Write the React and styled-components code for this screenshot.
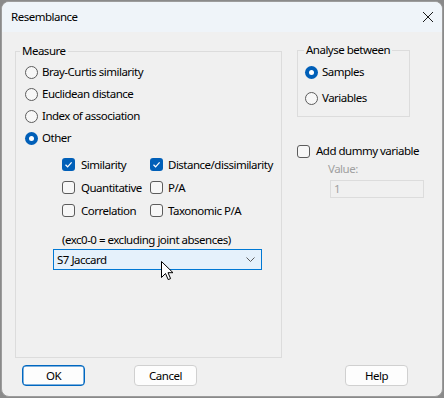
import React from "react";
import styled, { createGlobalStyle } from "styled-components";

const GlobalStyle = createGlobalStyle`
  html, body {
    margin: 0;
    padding: 0;
    background: #8a8a8a;
  }
  body {
    font-family: "Noto Sans", sans-serif;
    font-size: 11.5px;
    letter-spacing: -0.5px;
    color: #000;
  }
`;

const Window = styled.div`
  box-sizing: border-box;
  width: 442px;
  height: 396px;
  margin: 1px;
  border: 1px solid #9c9c9c;
  border-radius: 8px;
  background: #f0f0f0;
  overflow: hidden;
  display: flex;
  flex-direction: column;
`;

const TitleBar = styled.div`
  height: 30px;
  flex: none;
  display: flex;
  align-items: center;
  justify-content: space-between;
  padding: 0 8px 0 9px;
  background: #eff4f9;
`;

const Title = styled.span`
  line-height: 16px;
`;

const Close = styled.svg`
  width: 12px;
  height: 12px;
  display: block;
`;

const Body = styled.div`
  flex: 1;
  padding: 11px 0 0 13px;
  display: flex;
  flex-direction: column;
`;

const Main = styled.div`
  display: flex;
  align-items: flex-start;
  gap: 15px;
`;

const Group = styled.fieldset`
  box-sizing: border-box;
  margin: 0;
  padding: 0;
  width: ${(p) => p.$w}px;
  height: ${(p) => p.$h}px;
  border: 1px solid #dcdcdc;
  min-width: 0;
`;

const Legend = styled.legend`
  margin-left: ${(p) => p.$indent}px;
  padding: 0 2px;
  line-height: 16px;
`;

const Inner = styled.div`
  padding: ${(p) => p.$top}px 0 0 ${(p) => p.$left}px;
  display: flex;
  flex-direction: column;
  gap: ${(p) => p.$gap || 0}px;
`;

const Row = styled.label`
  display: flex;
  align-items: center;
  gap: ${(p) => p.$gap}px;
  height: ${(p) => p.$h || 22}px;
  line-height: 16px;
  white-space: nowrap;
`;

const RadioDot = styled.span`
  box-sizing: border-box;
  width: 13px;
  height: 13px;
  flex: none;
  border-radius: 50%;
  border: ${(p) => (p.$on ? "none" : "1px solid #5c5c5c")};
  background: ${(p) => (p.$on ? "#005fb8" : "#f7f7f7")};
  display: flex;
  align-items: center;
  justify-content: center;
  &::after {
    content: "";
    display: ${(p) => (p.$on ? "block" : "none")};
    width: 5px;
    height: 5px;
    border-radius: 50%;
    background: #fff;
  }
`;

const Box = styled.span`
  box-sizing: border-box;
  width: 13px;
  height: 13px;
  flex: none;
  border-radius: 3px;
  border: ${(p) => (p.$on ? "none" : "1px solid #5c5c5c")};
  background: ${(p) => (p.$on ? "#005fb8" : "#f7f7f7")};
  display: flex;
  align-items: center;
  justify-content: center;
`;

const CheckGrid = styled.div`
  display: grid;
  grid-template-columns: 88px auto;
  grid-auto-rows: 23px;
  margin: 4px 0 0 37px;
`;

const Note = styled.div`
  margin: 10px 0 0 37px;
  line-height: 16px;
`;

const ComboWrap = styled.div`
  position: relative;
  margin: 1px 0 0 28px;
  width: 209px;
`;

const Combo = styled.div`
  box-sizing: border-box;
  height: 21px;
  border: 1px solid #0078d4;
  background: #e5f1fb;
  display: flex;
  align-items: center;
  justify-content: space-between;
  padding: 0 6px 0 3px;
`;

const Cursor = styled.svg`
  position: absolute;
  left: 108px;
  top: 12px;
  width: 13px;
  height: 20px;
`;

const Side = styled.div`
  display: flex;
  flex-direction: column;
  margin-top: -1px;
`;

const DummyRow = styled(Row)`
  margin-top: 24px;
  height: 20px;
`;

const ValueLabel = styled.div`
  margin-left: 31px;
  line-height: 16px;
  color: #a0a0a0;
`;

const ValueInput = styled.div`
  box-sizing: border-box;
  margin: 3px 0 0 33px;
  width: 94px;
  height: 18px;
  border: 1px solid #dcdcdc;
  padding-left: 3px;
  line-height: 16px;
  color: #a0a0a0;
`;

const Buttons = styled.div`
  display: flex;
  margin: 7px 0 0 7px;
`;

const Button = styled.button`
  box-sizing: border-box;
  width: 63px;
  height: 21px;
  margin-left: ${(p) => p.$gap}px;
  padding: 0;
  font: inherit;
  letter-spacing: inherit;
  color: #000;
  background: #fdfdfd;
  border: 1px solid ${(p) => (p.$default ? "#0067c0" : "#d0d0d0")};
  border-radius: 4px;
  box-shadow: ${(p) => (p.$default ? "inset 0 0 0 0.5px #0067c0" : "none")};
`;

const Check = () => (
  <svg width="9" height="9" viewBox="0 0 9 9">
    <path d="M1.5 4.8 L3.6 6.8 L7.6 2.4" fill="none" stroke="#fff" strokeWidth="1.2" />
  </svg>
);

const Radio = ({ on, children }) => (
  <Row $gap={4}>
    <RadioDot $on={on} />
    {children}
  </Row>
);

const CheckItem = ({ on, gap = 6, children }) => (
  <Row $gap={gap} $h={23}>
    <Box $on={on}>{on && <Check />}</Box>
    {children}
  </Row>
);

export default function App() {
  return (
    <>
      <GlobalStyle />
      <Window>
        <TitleBar>
          <Title>Resemblance</Title>
          <Close viewBox="0 0 12 12">
            <path d="M1 1 L11 11 M11 1 L1 11" stroke="#1a1a1a" strokeWidth="1" />
          </Close>
        </TitleBar>
        <Body>
          <Main>
            <Group $w={267} $h={315}>
              <Legend $indent={4}>Measure</Legend>
              <Inner $top={2} $left={9}>
                <Radio>Bray-Curtis similarity</Radio>
                <Radio>Euclidean distance</Radio>
                <Radio>Index of association</Radio>
                <Radio on>Other</Radio>
                <CheckGrid>
                  <CheckItem on>Similarity</CheckItem>
                  <CheckItem on gap={5}>Distance/dissimilarity</CheckItem>
                  <CheckItem>Quantitative</CheckItem>
                  <CheckItem gap={5}>P/A</CheckItem>
                  <CheckItem>Correlation</CheckItem>
                  <CheckItem gap={5}>Taxonomic P/A</CheckItem>
                </CheckGrid>
                <Note>(exc0-0 = excluding joint absences)</Note>
                <ComboWrap>
                  <Combo>
                    <span>S7 Jaccard</span>
                    <svg width="9" height="5" viewBox="0 0 9 5">
                      <path d="M0.5 0.5 L4.5 4.5 L8.5 0.5" fill="none" stroke="#5a5a5a" strokeWidth="1" />
                    </svg>
                  </Combo>
                  <Cursor viewBox="0 0 13 20">
                    <path
                      d="M0.5 0.5 L0.5 16.5 L4.5 12.5 L7.2 18.6 L9.6 17.6 L7 11.7 L12 11.7 Z"
                      fill="#fff"
                      stroke="#000"
                      strokeWidth="1"
                      strokeLinejoin="miter"
                    />
                  </Cursor>
                </ComboWrap>
              </Inner>
            </Group>
            <Side>
              <Group $w={113} $h={75}>
                <Legend $indent={6}>Analyse between</Legend>
                <Inner $top={3} $left={7} $gap={4}>
                  <Radio on>Samples</Radio>
                  <Radio>Variables</Radio>
                </Inner>
              </Group>
              <DummyRow $gap={6}>
                <Box />
                Add dummy variable
              </DummyRow>
              <ValueLabel>Value:</ValueLabel>
              <ValueInput>1</ValueInput>
            </Side>
          </Main>
          <Buttons>
            <Button $default $gap={0}>OK</Button>
            <Button $gap={49}>Cancel</Button>
            <Button $gap={148}>Help</Button>
          </Buttons>
        </Body>
      </Window>
    </>
  );
}
